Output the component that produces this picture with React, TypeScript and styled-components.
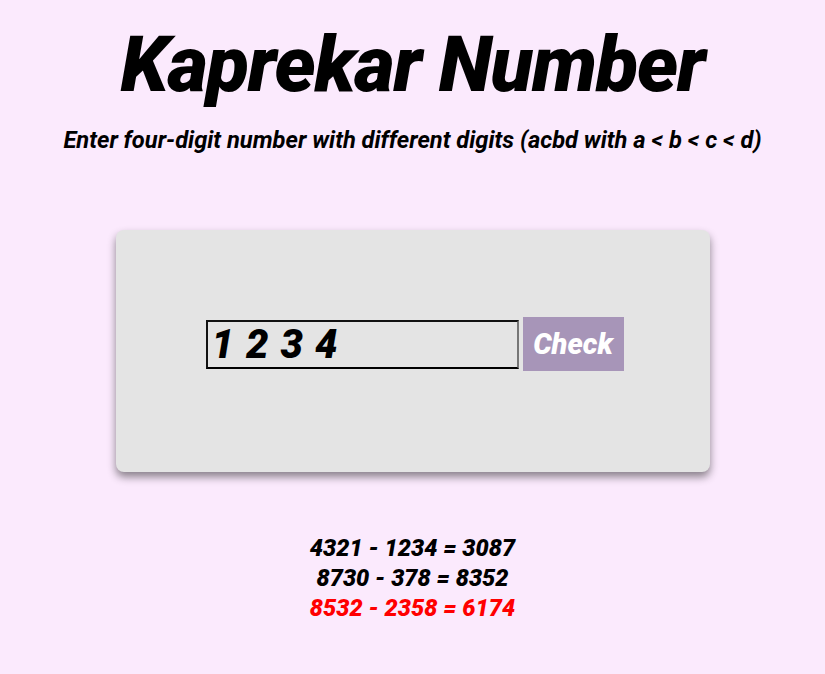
import React from "react";
import styled, { createGlobalStyle } from "styled-components";

const Global = createGlobalStyle`
  html, body { margin: 0; padding: 0; }
  body {
    background: #fbeafd;
    font-family: Roboto, "Liberation Sans", sans-serif;
    font-style: italic;
    font-weight: 900;
  }
`;

const Page = styled.div`
  display: flex;
  flex-direction: column;
  align-items: center;
  padding-top: 20px;
`;

const Title = styled.h1`
  margin: 0;
  font-size: 78px;
  line-height: 90px;
  font-weight: 900;
  font-style: italic;
  color: #000;
  letter-spacing: -1.3px;
`;

const Subtitle = styled.p`
  margin: 16px 0 0;
  font-size: 23.7px;
  line-height: 28px;
  font-weight: 700;
  font-style: italic;
  color: #000;
`;

const Card = styled.div`
  margin-top: 76px;
  width: 594px;
  height: 242px;
  box-sizing: border-box;
  padding: 0 0 14px 4px;
  background: #e4e4e4;
  border-radius: 8px;
  box-shadow: 0 5px 8px rgba(0, 0, 0, 0.45);
  display: flex;
  align-items: center;
  justify-content: center;
  gap: 4px;
`;

const NumberInput = styled.input`
  box-sizing: border-box;
  width: 313px;
  height: 49px;
  padding: 0 4px;
  background: #e4e4e4;
  border: 2px solid;
  border-color: #111 #767676 #000 #111;
  font-family: Roboto, "Liberation Sans", sans-serif;
  font-size: 40px;
  font-weight: 900;
  font-style: italic;
  letter-spacing: 12px;
  color: #000;
  outline: none;
`;

const CheckButton = styled.button`
  width: 101px;
  height: 54px;
  background: #a795b8;
  border: none;
  color: #fff;
  font-family: Roboto, "Liberation Sans", sans-serif;
  font-size: 29px;
  font-weight: 900;
  font-style: italic;
  padding: 0;
  cursor: pointer;
`;

const Results = styled.div`
  margin-top: 61px;
  display: flex;
  flex-direction: column;
  align-items: center;
`;

const Line = styled.div<{ $hit?: boolean }>`
  font-size: 23.5px;
  line-height: 30px;
  font-weight: 900;
  font-style: italic;
  color: ${(p) => (p.$hit ? "#ff0000" : "#000")};
`;

export default function App() {
  return (
    <>
      <Global />
      <Page>
        <Title>Kaprekar Number</Title>
        <Subtitle>
          Enter four-digit number with different digits (acbd with a &lt; b &lt; c &lt; d)
        </Subtitle>
        <Card>
          <NumberInput defaultValue="1234" />
          <CheckButton>Check</CheckButton>
        </Card>
        <Results>
          <Line>4321 - 1234 = 3087</Line>
          <Line>8730 - 378 = 8352</Line>
          <Line $hit>8532 - 2358 = 6174</Line>
        </Results>
      </Page>
    </>
  );
}
